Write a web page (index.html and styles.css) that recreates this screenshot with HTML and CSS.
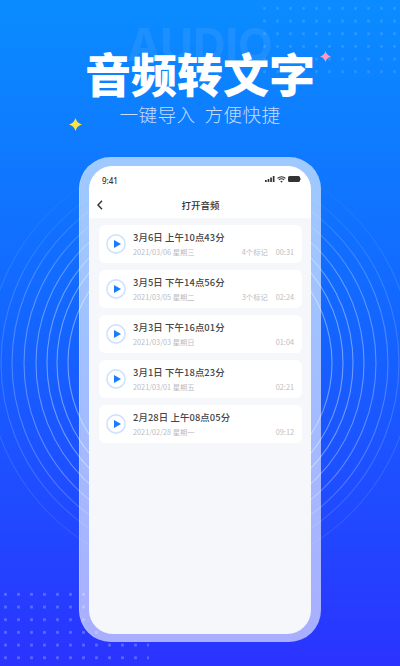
FILE: index.html
```html
<!DOCTYPE html>
<html lang="zh">
<head>
<meta charset="utf-8">
<title>音频转文字</title>
<link rel="stylesheet" href="styles.css">
</head>
<body>
<main class="poster">
  <div class="dots dots-top"></div>
  <div class="dots dots-bottom"></div>
  <svg class="rings" viewBox="0 0 400 460" fill="none" stroke="#fff" stroke-width="1.1">
    <circle cx="200" cy="230" r="132" stroke-opacity=".4"/>
    <circle cx="200" cy="230" r="143" stroke-opacity=".4"/>
    <circle cx="200" cy="230" r="153" stroke-opacity=".38"/>
    <circle cx="200" cy="230" r="164" stroke-opacity=".35"/>
    <circle cx="200" cy="230" r="176" stroke-opacity=".3"/>
    <circle cx="200" cy="230" r="188" stroke-opacity=".24"/>
    <circle cx="200" cy="230" r="199" stroke-opacity=".16"/>
    <circle cx="200" cy="230" r="213" stroke-opacity=".12"/>
  </svg>
  <div class="ghost">AUDIO</div>
  <svg class="star star-pink" viewBox="0 0 10 10"><path d="M5 0Q6 4 10 5Q6 6 5 10Q4 6 0 5Q4 4 5 0Z"/></svg>
  <svg class="star star-yellow" viewBox="0 0 10 10"><path d="M5 0Q6 4 10 5Q6 6 5 10Q4 6 0 5Q4 4 5 0Z"/></svg>

  <header class="hero">
    <h1>音频转文字</h1>
    <p>一键导入&nbsp;&nbsp;方便快捷</p>
  </header>

  <section class="phone">
    <div class="screen">
      <div class="top">
        <div class="status">
          <span class="time">9:41</span>
          <span class="status-icons">
            <svg width="10" height="6" viewBox="0 0 10 6" fill="#333"><rect x="0" y="4" width="1.7" height="2"/><rect x="2.6" y="3" width="1.7" height="3"/><rect x="5.2" y="1.5" width="1.7" height="4.5"/><rect x="7.8" y="0" width="1.7" height="6"/></svg>
            <svg width="9" height="7" viewBox="0 0 9 7" fill="none" stroke="#333" stroke-width="1.1"><path d="M.5 2.4a5.6 5.6 0 0 1 8 0M1.9 3.9a3.6 3.6 0 0 1 5.2 0"/><path d="M4.5 6.8 3.3 5.3a1.7 1.7 0 0 1 2.4 0Z" fill="#333" stroke="none"/></svg>
            <svg width="13" height="6" viewBox="0 0 13 6"><rect x="0" y="0" width="12" height="6" rx="1.6" fill="#333"/><rect x="12.2" y="2" width=".8" height="2" fill="#888"/></svg>
          </span>
        </div>
        <div class="nav">
          <svg class="back" width="6" height="10" viewBox="0 0 6 10" fill="none" stroke="#333" stroke-width="1.4"><path d="M5 .8 1 5l4 4.2"/></svg>
          <span class="nav-title">打开音频</span>
        </div>
      </div>
      <ul class="list">
        <li class="card">
          <svg class="play" viewBox="0 0 20 20"><circle cx="10" cy="10" r="9.1" fill="#fff" stroke="#cfe3ff" stroke-width="1.6"/><path d="M8 6 15 10l-7 4Z" fill="#1a7cff"/></svg>
          <div class="info">
            <div class="name">3月6日 上午10点43分</div>
            <div class="meta"><span>2021/03/06 星期三</span><span class="mark">4个标记</span><span class="dur">00:31</span></div>
          </div>
        </li>
        <li class="card">
          <svg class="play" viewBox="0 0 20 20"><circle cx="10" cy="10" r="9.1" fill="#fff" stroke="#cfe3ff" stroke-width="1.6"/><path d="M8 6 15 10l-7 4Z" fill="#1a7cff"/></svg>
          <div class="info">
            <div class="name">3月5日 下午14点56分</div>
            <div class="meta"><span>2021/03/05 星期二</span><span class="mark">3个标记</span><span class="dur">02:24</span></div>
          </div>
        </li>
        <li class="card">
          <svg class="play" viewBox="0 0 20 20"><circle cx="10" cy="10" r="9.1" fill="#fff" stroke="#cfe3ff" stroke-width="1.6"/><path d="M8 6 15 10l-7 4Z" fill="#1a7cff"/></svg>
          <div class="info">
            <div class="name">3月3日 下午16点01分</div>
            <div class="meta"><span>2021/03/03 星期日</span><span class="dur">01:04</span></div>
          </div>
        </li>
        <li class="card">
          <svg class="play" viewBox="0 0 20 20"><circle cx="10" cy="10" r="9.1" fill="#fff" stroke="#cfe3ff" stroke-width="1.6"/><path d="M8 6 15 10l-7 4Z" fill="#1a7cff"/></svg>
          <div class="info">
            <div class="name">3月1日 下午18点23分</div>
            <div class="meta"><span>2021/03/01 星期五</span><span class="dur">02:21</span></div>
          </div>
        </li>
        <li class="card">
          <svg class="play" viewBox="0 0 20 20"><circle cx="10" cy="10" r="9.1" fill="#fff" stroke="#cfe3ff" stroke-width="1.6"/><path d="M8 6 15 10l-7 4Z" fill="#1a7cff"/></svg>
          <div class="info">
            <div class="name">2月28日 上午08点05分</div>
            <div class="meta"><span>2021/02/28 星期一</span><span class="dur">09:12</span></div>
          </div>
        </li>
      </ul>
    </div>
  </section>
</main>
</body>
</html>
```
FILE: styles.css
```css
* { box-sizing: border-box; }
html, body { margin: 0; padding: 0; }
body { font-family: "Noto Sans CJK SC", "Noto Sans", sans-serif; }

.poster {
  position: relative;
  width: 400px;
  height: 666px;
  overflow: hidden;
  display: flex;
  flex-direction: column;
  align-items: center;
  background: linear-gradient(180deg, #0a8cff 0%, #1464ff 50%, #2b33ff 100%);
}

.hero { position: relative; text-align: center; color: #fff; margin-top: 47px; height: 110px; }
.hero h1 { margin: 0; font-size: 46px; line-height: 50px; font-weight: 900; white-space: nowrap; }
.hero p { margin: 5px 0 0; font-size: 18.6px; line-height: 24px; font-weight: 300; letter-spacing: .4px; color: #c5dcff; white-space: nowrap; }

.ghost {
  position: absolute; left: 100px; top: 23px; width: 200px; text-align: center;
  font: 700 45px/44px Inter, sans-serif; color: #fff; opacity: .07;
}
.dots { position: absolute; background-size: 13px 12.7px; }
.dots-top {
  left: 258px; top: 2px; width: 142px; height: 72px;
  background-image: radial-gradient(circle, rgba(255,255,255,.13) 1.2px, transparent 1.7px);
}
.dots-bottom {
  left: -1.5px; top: 587.5px; width: 150px; height: 78px;
  background-image: radial-gradient(circle, rgba(255,255,255,.24) 1.3px, transparent 1.8px);
}
.rings {
  position: absolute; left: 0; top: 133px; width: 400px; height: 460px;
  -webkit-mask-image: linear-gradient(180deg, transparent 30px, #000 150px, #000 340px, rgba(0,0,0,.4) 100%);
  mask-image: linear-gradient(180deg, transparent 30px, #000 150px, #000 340px, rgba(0,0,0,.4) 100%);
}
.star { position: absolute; }
.star-pink { left: 320px; top: 50.5px; width: 11px; height: 11px; fill: #ff9ac0; }
.star-yellow { left: 69px; top: 117.5px; width: 13px; height: 13px; fill: #ffe23c; }

.phone {
  position: relative;
  width: 242px; height: 485px; padding: 9px 10px 8px;
  border-radius: 32px;
  background: rgba(255,255,255,.6);
  box-shadow: inset 1px 0 0 rgba(255,255,255,.2);
}
.screen { height: 100%; border-radius: 24px; overflow: hidden; background: #f6f7fb; }
.top { height: 52px; background: #fff; padding: 0 10px 0 13px; }
.status { display: flex; justify-content: space-between; align-items: center; height: 29px; }
.time { font: 500 8px/10px "Noto Sans", sans-serif; color: #333; }
.status-icons { display: flex; align-items: center; gap: 2px; margin-top: -3px; }
.nav { position: relative; height: 20px; display: flex; align-items: center; justify-content: center; margin-left: -2px; }
.back { position: absolute; left: -3px; top: 5px; }
.nav-title { font-size: 9.5px; font-weight: 500; color: #333; }

.list { list-style: none; margin: 0; padding: 7px 9px 0 10px; display: flex; flex-direction: column; gap: 7px; }
.card { height: 38px; border-radius: 6px; background: #fff; display: flex; align-items: center; padding: 0 8px 0 7px; gap: 7px; }
.play { width: 20px; height: 20px; flex: none; }
.info { flex: 1; min-width: 0; }
.name { font-size: 9.4px; line-height: 14px; font-weight: 500; letter-spacing: .1px; color: #444; white-space: nowrap; margin-top: -1px; }
.meta { display: flex; font-size: 7.3px; line-height: 11px; margin-top: 3px; color: #bcbcc2; white-space: nowrap; }
.mark { margin-left: auto; }
.dur { margin-left: auto; }
.mark + .dur { margin-left: 8px; }
```
